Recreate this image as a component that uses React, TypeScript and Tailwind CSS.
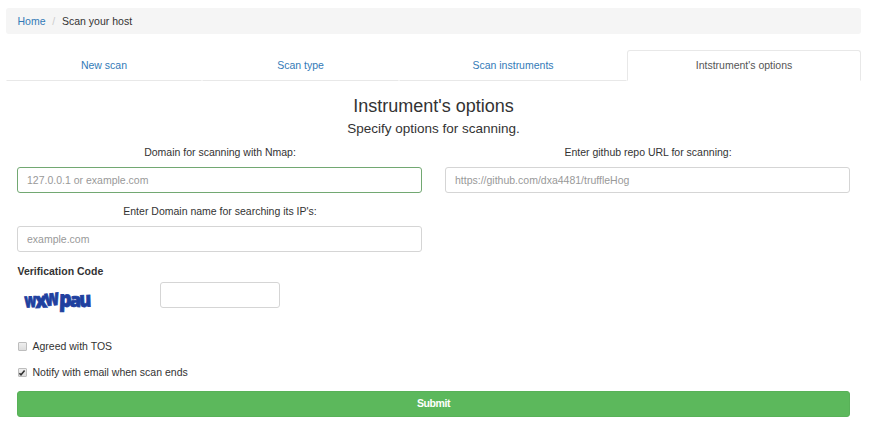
import type { ReactNode } from 'react';

function Tab({ children, width, active = false }: { children: ReactNode; width: string; active?: boolean }) {
  return (
    <a
      className={`${width} flex h-[31px] items-center justify-center rounded-t-[3px] border ${
        active ? 'border-[#e8e8e8] border-b-white bg-white text-[#555]' : 'border-transparent border-b-[#e8e8e8] text-[#337ab7]'
      }`}
    >
      {children}
    </a>
  );
}

function Field({ label, placeholder, valid = false }: { label: string; placeholder: string; valid?: boolean }) {
  return (
    <label className="block h-[59px] w-[405px]">
      <span className="block h-[22px] pl-px text-center leading-[15px]">{label}</span>
      <input
        placeholder={placeholder}
        className={`block h-[26px] w-full rounded-[3px] border bg-white px-[9px] text-[10.5px] outline-none placeholder:text-[#999] ${
          valid ? 'border-[#72a872]' : 'border-[#d5d5d5]'
        }`}
      />
    </label>
  );
}

function Check({ label, checked = false }: { label: string; checked?: boolean }) {
  return (
    <label className="flex h-[26px] items-start pl-[0.5px] leading-[15px]">
      <span className="mt-[3px] mr-[6px] flex h-[9px] w-[9px] items-center justify-center rounded-[1px] border border-[#bdbdbd] bg-linear-to-b from-[#eeeeee] to-[#dddddd]">
        {checked && (
          <svg viewBox="0 0 8 8" className="h-[8px] w-[8px] shrink-0">
            <path d="M1.4 4.2 3 5.8 6.6 1.6" fill="none" stroke="#333" strokeWidth="1.6" />
          </svg>
        )}
      </span>
      {label}
    </label>
  );
}

const captcha = [
  { c: 'w', x: 7.8, y: 25.5, r: -3, s: 19.5, w: 12 },
  { c: 'x', x: 18.5, y: 26, r: -3, s: 21, w: 12 },
  { c: 'w', x: 28.5, y: 24.2, r: -7, s: 22, w: 14.5 },
  { c: 'p', x: 42, y: 24.6, r: 2, s: 22, w: 12.5 },
  { c: 'a', x: 52.5, y: 24.6, r: 3, s: 19, w: 11.5 },
  { c: 'u', x: 62.5, y: 25, r: -2, s: 21, w: 12 },
];

export default function App() {
  return (
    <div className="h-[432px] w-[872px] overflow-hidden bg-white pt-[8px] pl-[6px] font-['Liberation_Sans',Arial,sans-serif] text-[10.5px] text-[#333]">
      <div className="w-[855px]">
        <nav className="flex h-[26px] items-center rounded-[3px] bg-[#f5f5f5] pt-[2px] pl-[11.5px]">
          <a className="text-[#337ab7]">Home</a>
          <span className="w-[16.5px] text-center text-[#ccc]">/</span>
          <span>Scan your host</span>
        </nav>
        <div className="mt-[16px] flex">
          <Tab width="w-[196px]">New scan</Tab>
          <Tab width="w-[197px]">Scan type</Tab>
          <Tab width="w-[228px]">Scan instruments</Tab>
          <Tab width="w-[234px]" active>Intstrument's options</Tab>
        </div>
        <main className="px-[11px] pt-[13px]">
          <h1 className="text-center text-[18px] leading-[24px]">Instrument's options</h1>
          <h2 className="h-[27px] text-center text-[13.5px] leading-[22px]">Specify options for scanning.</h2>
          <div className="flex flex-wrap gap-x-[23px]">
            <Field label="Domain for scanning with Nmap:" placeholder="127.0.0.1 or example.com" valid />
            <Field label="Enter github repo URL for scanning:" placeholder="https://github.com/dxa4481/truffleHog" />
            <Field label="Enter Domain name for searching its IP's:" placeholder="example.com" />
          </div>
          <div className="mt-[1px] h-[18px] pl-[0.5px] leading-[15px] font-bold">Verification Code</div>
          <div className="flex h-[57px]">
            <svg className="h-[38px] w-[143px] overflow-visible" viewBox="0 0 143 38">
              {captcha.map(({ c, x, y, r, s, w }, i) => (
                <text
                  key={i}
                  x={x}
                  y={y}
                  fontSize={s}
                  textLength={w}
                  lengthAdjust="spacingAndGlyphs"
                  transform={`rotate(${r} ${x} ${y})`}
                  fill="#20409f"
                  stroke="#20409f"
                  strokeWidth="0.8"
                  className="font-['Open_Sans',sans-serif] font-extrabold"
                >
                  {c}
                </text>
              ))}
            </svg>
            <input className="h-[26px] w-[120px] rounded-[3px] border border-[#d5d5d5] px-2 outline-none" />
          </div>
          <Check label="Agreed with TOS" />
          <Check label="Notify with email when scan ends" checked />
          <button className="flex h-[26px] w-[833px] items-center justify-center rounded-[3px] border border-[#58b158] bg-[#5cb85c] font-bold tracking-[-0.4px] text-white">
            Submit
          </button>
        </main>
      </div>
    </div>
  );
}
